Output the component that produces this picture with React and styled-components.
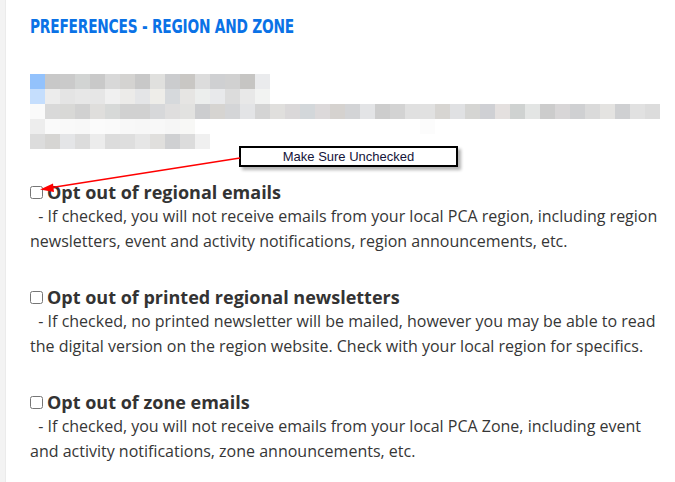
import React from "react";
import styled, { createGlobalStyle } from "styled-components";

const GlobalStyle = createGlobalStyle`
  html, body { margin: 0; padding: 0; background: #fff; }
  body { font-family: "Open Sans", "Liberation Sans", sans-serif; }
`;

const Page = styled.div`
  position: relative;
  display: flex;
  width: 675px;
  height: 482px;
  overflow: hidden;
  background: #fff;
`;

const Stripe = styled.div`
  width: 5px;
  flex: none;
  background: #f3f3f3;
  border-right: 1px solid #ebebeb;
`;

const Content = styled.main`
  flex: 1;
  padding: 0 0 0 24px;
`;

const Title = styled.h2`
  margin: 13px 0 0 0;
  font-family: "DejaVu Sans Condensed", "DejaVu Sans", sans-serif;
  font-weight: bold;
  font-size: 20px;
  line-height: 26px;
  color: #0a72e6;
  letter-spacing: -0.3px;
  transform: scaleX(0.765);
  transform-origin: left center;
  white-space: nowrap;
`;

const Mosaic = styled.div`
  margin-top: 35px;
  display: flex;
  flex-direction: column;
`;

const MosaicRow = styled.div`
  display: flex;
  height: 15px;
`;

const Pixel = styled.span`
  width: 15px;
  height: 15px;
  flex: none;
  background: ${(p) => p.$c};
`;

const rows = [
  "#93c2fc #c8c8c8 #cacaca #d2d4d3 #c9c9c9 #d8d8d8 #d4d3d1 #c8c8c8 #e0e0de #cbccce #c9c7c4 #dcdcdc #cfd0d2 #d1d1d1 #c6c5c3 #eaebed",
  "#c5defd #ececec #e4e4e4 #e7e7e7 #e6e6e6 #f0f0f0 #ecebe9 #e4e5e7 #eeede9 #d6d9dc #e6e5e3 #eceeed #e8e9eb #dcdcdc #e8e8e8 #f2f3f2",
  "#fafafa #d9d9d9 #d8d8d6 #d1d1d1 #dfdedc #d7d9d8 #d1d1d1 #d1d1d1 #d7d8da #dfdede #e2e2e0 #cccdcf #d6d4d1 #d4d5d7 #e3e4e6 #d4d4d4 #e0dfdd #dad8d9 #d3d7da #dcd9da #d5d2cf #d3d4d6 #e3e4e6 #cdcdcd #d3d3d3 #e0e0e0 #e1e1e1 #d7d5d2 #e0e1e3 #d5d5d3 #cfd0d4 #e4e0df #cfd2d1 #e3e5e4 #cccccc #d8d6d7 #cfd0d2 #dadada #e4e3e1 #cfd0d2 #e1e1e1 #dcdcdc",
  "#ededed #fafafa #f9f9f9 #f8f8f8 #fbfbfb #fafafa #f8f8f8 #f7f7f7 #f8f8f8 #f6f6f6 #f8f8f6 #fff #fff #fff #fff #fff #fff #fff #fff #fff #fff #fff #fff #fff #fff #fff #fcfcfc",
  "#dcdcdc #d6d5d3 #e4e5e7 #dcdcdc #ececec #dcdcdc #dedede #e6e6e6 #e0dfdd #cfd0d2 #dcdcdc #f0f0f0",
].map((r) => r.split(" "));

const Options = styled.div`
  margin-top: 31px;
  display: flex;
  flex-direction: column;
  gap: 31px;
`;

const Option = styled.div`
  display: flex;
  flex-direction: column;
`;

const LabelRow = styled.label`
  display: flex;
  align-items: center;
  gap: 4px;
  font-family: "Open Sans", "Liberation Sans", sans-serif;
  font-weight: 700;
  font-size: 18px;
  line-height: 24px;
  color: #333;
`;

const Box = styled.input.attrs({ type: "checkbox" })`
  width: 13px;
  height: 13px;
  margin: 1px 0 0 0;
  flex: none;
`;

const Desc = styled.p`
  margin: 0;
  font-family: "Open Sans", "Liberation Sans", sans-serif;
  font-size: 16px;
  line-height: 25px;
  color: #363636;
  width: 636px;
`;

const Callout = styled.div`
  position: absolute;
  left: 239px;
  top: 146px;
  width: 215px;
  height: 17px;
  border: 2px solid #000;
  background: #fff;
  box-shadow: 3px 3px 3px rgba(0, 0, 0, 0.3);
  font-family: "Liberation Sans", Arial, sans-serif;
  font-size: 13px;
  line-height: 17px;
  color: #14143a;
  text-align: center;
`;

const Arrow = styled.svg`
  position: absolute;
  left: 0;
  top: 0;
  pointer-events: none;
`;

const options = [
  {
    label: "Opt out of regional emails",
    desc: "If checked, you will not receive emails from your local PCA region, including region newsletters, event and activity notifications, region announcements, etc.",
  },
  {
    label: "Opt out of printed regional newsletters",
    desc: "If checked, no printed newsletter will be mailed, however you may be able to read the digital version on the region website. Check with your local region for specifics.",
  },
  {
    label: "Opt out of zone emails",
    desc: "If checked, you will not receive emails from your local PCA Zone, including event and activity notifications, zone announcements, etc.",
  },
];

export default function App() {
  return (
    <Page>
      <GlobalStyle />
      <Stripe />
      <Content>
        <Title>PREFERENCES - REGION AND ZONE</Title>
        <Mosaic>
          {rows.map((r, i) => (
            <MosaicRow key={i}>
              {r.map((c, j) => (
                <Pixel key={j} $c={c} />
              ))}
            </MosaicRow>
          ))}
        </Mosaic>
        <Options>
          {options.map((o) => (
            <Option key={o.label}>
              <LabelRow>
                <Box />
                {o.label}
              </LabelRow>
              <Desc>{"\u00a0\u00a0- " + o.desc}</Desc>
            </Option>
          ))}
        </Options>
      </Content>
      <Callout>Make Sure Unchecked</Callout>
      <Arrow width="675" height="482" viewBox="0 0 675 482">
        <line x1="240" y1="158" x2="52" y2="187.5" stroke="#ff0000" strokeWidth="1.5" />
        <polygon points="40,189.5 53,183.5 54,192" fill="#ff0000" />
      </Arrow>
    </Page>
  );
}
